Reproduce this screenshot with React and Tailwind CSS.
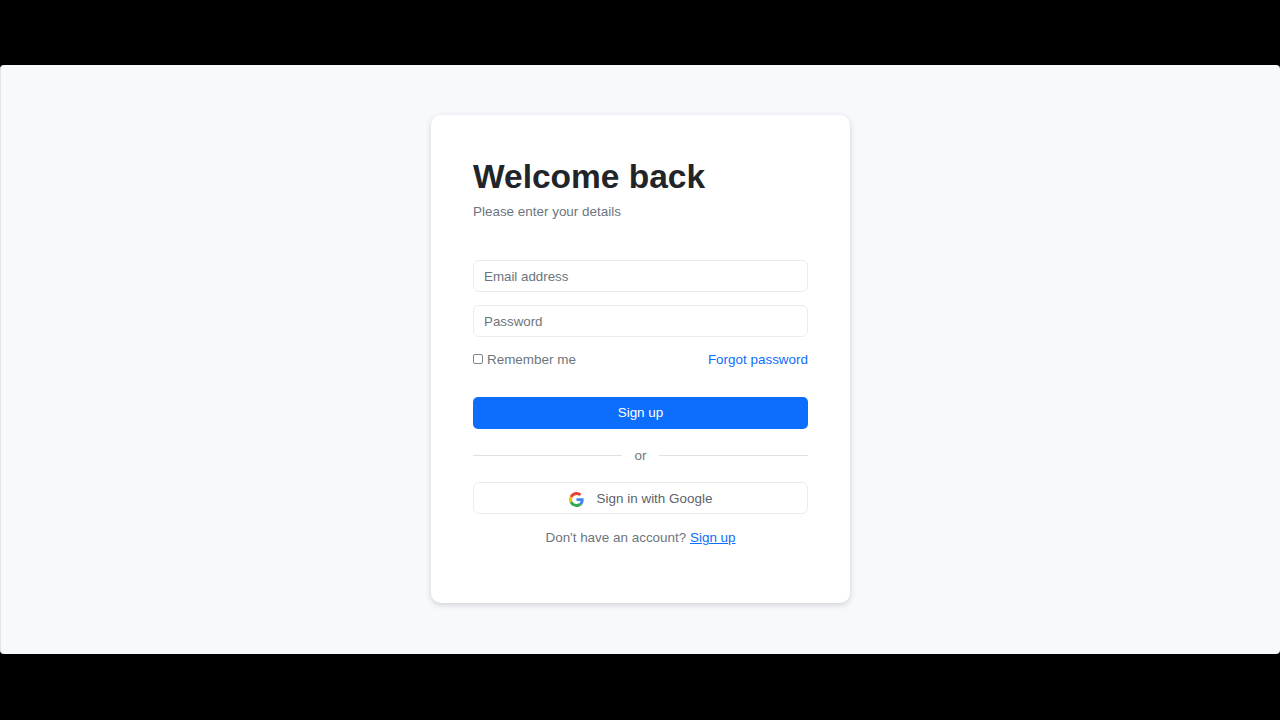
export default function App() {
  return (
    <div className="h-[720px] bg-black flex flex-col pt-[65px] pb-[66px] font-['Liberation_Sans',Arial,sans-serif]">
      <div className="flex-1 bg-[#f8f9fd] rounded-[4px] border-l border-l-[#e3e4e8] flex justify-center pt-[50px]">
        <div className="w-[419px] h-[488px] bg-white rounded-[10px] shadow-[0_2px_6px_rgba(0,0,0,0.16)] pt-[42px] px-[42px]">
          <h1 className="text-[33.5px] leading-[40px] font-bold text-[#212529]">Welcome back</h1>
          <p className="mt-[5px] text-[13.44px] leading-[20px] text-[#6c757d]">Please enter your details</p>

          <form className="mt-[38px]">
            <input
              type="text"
              placeholder="Email address"
              className="block w-full h-[32px] px-[10px] text-[13.33px] border border-[#e9ecef] rounded-[6px] outline-none placeholder:text-[#6c757d]"
            />
            <input
              type="password"
              placeholder="Password"
              className="block w-full h-[32px] mt-[13px] px-[10px] text-[13.33px] border border-[#e9ecef] rounded-[6px] outline-none placeholder:text-[#6c757d]"
            />

            <div className="mt-[13px] flex items-center justify-between text-[13.44px] leading-[20px]">
              <label className="flex items-center text-[#6c757d]">
                <input type="checkbox" className="appearance-none w-[10px] h-[10px] m-0 mr-[4px] -mt-[2px] bg-white border border-[#80858c] rounded-[2px]" />
                Remember me
              </label>
              <a href="#" className="text-[#0d6efd]">Forgot password</a>
            </div>

            <button type="button" className="block w-full h-[32px] mt-[27px] bg-[#0d6efd] text-white text-[13.44px] rounded-[5px]">
              Sign up
            </button>

            <div className="mt-[16px] flex items-center gap-[13px] text-[13.44px] leading-[20px] text-[#6c757d]">
              <div className="flex-1 h-px bg-[#dee2e6]"></div>
              <span className="relative top-px">or</span>
              <div className="flex-1 h-px bg-[#dee2e6]"></div>
            </div>

            <button type="button" className="w-full h-[32px] mt-[17px] bg-white border border-[#e9ecef] rounded-[6px] flex items-center justify-center gap-[13px] text-[13.44px] text-[#5c636a]">
              <svg width="15" height="15" viewBox="0 0 48 48" className="mt-[2px]">
                <path fill="#EA4335" d="M24 9.5c3.54 0 6.71 1.22 9.21 3.6l6.85-6.85C35.9 2.38 30.47 0 24 0 14.62 0 6.51 5.38 2.56 13.22l7.98 6.19C12.43 13.72 17.74 9.5 24 9.5z" />
                <path fill="#4285F4" d="M46.98 24.55c0-1.57-.15-3.09-.38-4.55H24v9.02h12.94c-.58 2.96-2.26 5.48-4.78 7.18l7.73 6c4.51-4.18 7.09-10.36 7.09-17.65z" />
                <path fill="#FBBC05" d="M10.53 28.59c-.48-1.45-.76-2.99-.76-4.59s.27-3.14.76-4.59l-7.98-6.19C.92 16.46 0 20.12 0 24c0 3.88.92 7.54 2.56 10.78l7.97-6.19z" />
                <path fill="#34A853" d="M24 48c6.48 0 11.93-2.13 15.89-5.81l-7.73-6c-2.15 1.45-4.92 2.3-8.16 2.3-6.26 0-11.57-4.22-13.47-9.91l-7.98 6.19C6.51 42.62 14.62 48 24 48z" />
              </svg>
              <span className="relative top-px">Sign in with Google</span>
            </button>

            <p className="mt-[14px] text-center text-[13.44px] leading-[20px] text-[#6c757d]">
              Don't have an account? <a href="#" className="text-[#0d6efd] underline">Sign up</a>
            </p>
          </form>
        </div>
      </div>
    </div>
  );
}
